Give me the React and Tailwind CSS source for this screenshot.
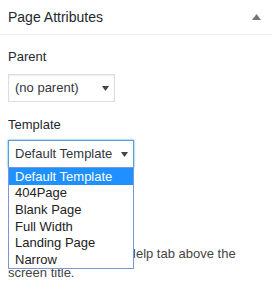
import React from 'react';

function Caret({ up = false, className = '' }) {
    return (
        <svg width="7" height="5" viewBox="0 0 7 5" className={className}>
            {up ? <polygon points="0,5 3.5,0 7,5" fill="currentColor" /> : <polygon points="0,0 7,0 3.5,5" fill="currentColor" />}
        </svg>
    );
}

const options = ['Default Template', '404Page', 'Blank Page', 'Full Width', 'Landing Page', 'Narrow'];

export default function App() {
    return (
        <div className="w-[272px] h-[290px] overflow-hidden bg-white text-[13px] text-[#23282d]" style={{ fontFamily: '"Liberation Sans", Arial, sans-serif' }}>
            <div className="flex h-[35px] items-center justify-between border-b border-[#eeeeee] pl-[8px] pr-[11px]">
                <h2 className="text-[14px] leading-[18px] text-[#23282d]">Page Attributes</h2>
                <svg width="9" height="6" viewBox="0 0 9 6" className="text-[#72777c]">
                    <polygon points="0,6 4.5,0 9,6" fill="currentColor" />
                </svg>
            </div>

            <div className="px-[8px] pt-[13px]">
                <p className="leading-[18px]">Parent</p>
                <div className="mt-[8px] flex h-[28px] w-[107px] items-center justify-between border border-[#dddddd] bg-white pl-[6px] pr-[5px] text-[#32373c] shadow-[inset_0_1px_2px_rgba(0,0,0,0.07)]">
                    <span>(no parent)</span>
                    <Caret className="text-[#444]" />
                </div>

                <p className="mt-[14px] leading-[18px]">Template</p>
                <div className="relative mt-[6px] w-[126px]">
                    <div className="flex h-[28px] items-center justify-between border border-[#5b9dd9] bg-white pl-[6px] pr-[5px] text-[#32373c] shadow-[0_0_2px_rgba(30,140,190,0.8)]">
                        <span>Default Template</span>
                        <Caret className="text-[#444]" />
                    </div>
                    <ul className="absolute left-0 top-[27px] z-10 grid h-[102px] w-[126px] grid-rows-6 border border-[#7b98d4] bg-white">
                        {options.map((o, i) => (
                            <li
                                key={o}
                                className={`flex items-center pl-[6px] leading-none ${i === 0 ? 'bg-[#1e90ff] text-white' : 'text-[#222]'}`}
                            >
                                {o}
                            </li>
                        ))}
                    </ul>
                </div>

                <p className="mt-[76px] w-[256px] leading-[19px] text-[#444]">
                    Need help? Use the Help tab above the screen title.
                </p>
            </div>
        </div>
    );
}
